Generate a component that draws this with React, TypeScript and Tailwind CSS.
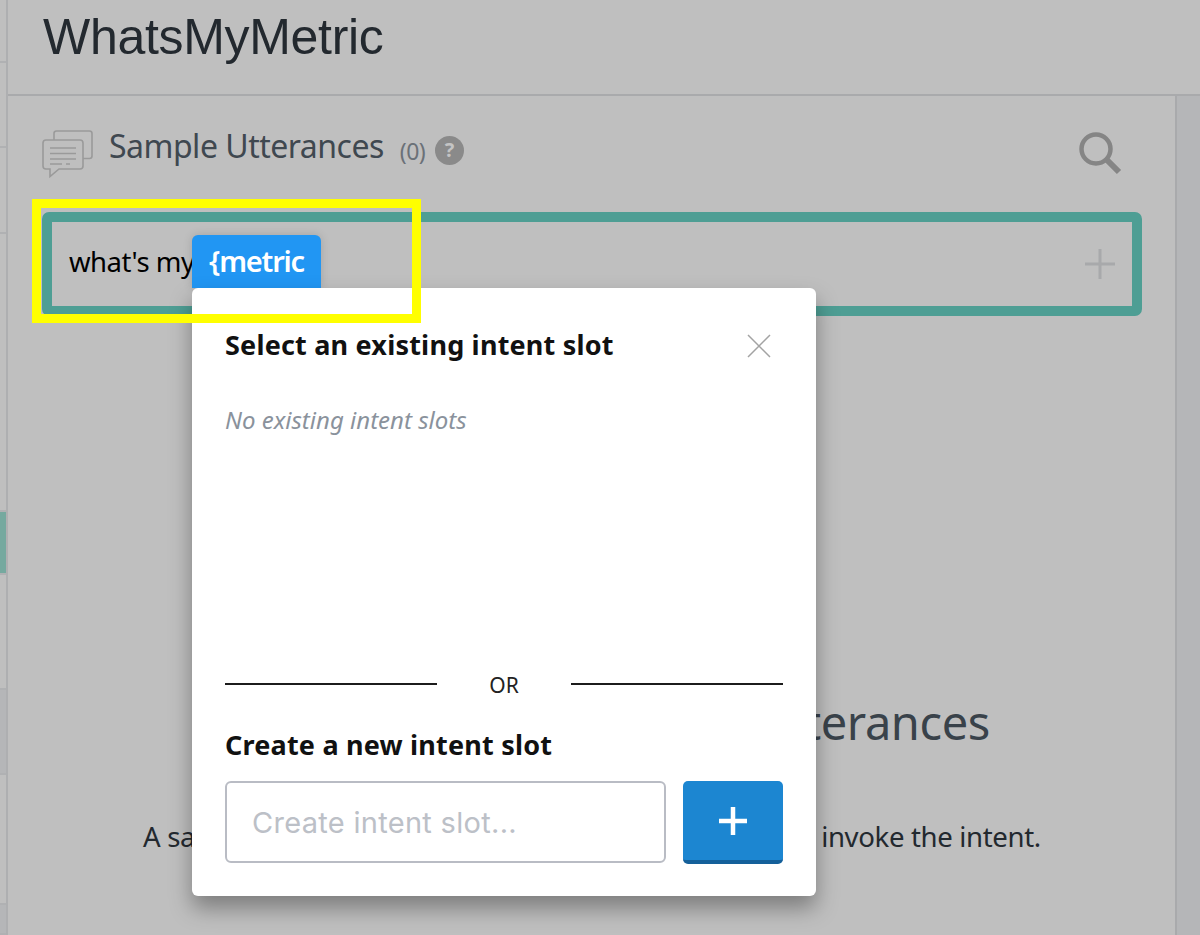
const SIDE_ROWS = [
  { h: "h-[63px]", bg: "bg-[#bfbfbf]" },
  { h: "h-[85px]", bg: "bg-[#bfbfbf]" },
  { h: "h-[86px]", bg: "bg-[#bfbfbf]" },
  { h: "h-[278px]", bg: "bg-[#bfbfbf]" },
  { h: "h-[63px]", bg: "bg-[#75a99f]" },
  { h: "h-[115px]", bg: "bg-[#bfbfbf]" },
  { h: "h-[85px]", bg: "bg-[#b5b6b8]" },
  { h: "h-[130px]", bg: "bg-[#bfbfbf]" },
  { h: "h-[30px]", bg: "bg-[#b5b6b8]" },
];

function ChatIcon() {
  return (
    <svg width="52" height="50" viewBox="0 0 52 50" fill="none" stroke="#9a9a9a" strokeWidth="1.6" className="shrink-0">
      <path d="M12 11V4.5Q12 2 14.5 2H47.5Q50 2 50 4.5V27Q50 29.5 47.5 29.5H41" />
      <path d="M4 11H38Q41 11 41 14V37Q41 40 38 40H17L8 47.5V40H4Q1 40 1 37V14Q1 11 4 11Z" fill="#bfbfbf" />
      <path d="M8 19H34M8 24.500H34M8 30H34M8 35H20M24 35H28" strokeWidth="1.4" />
    </svg>
  );
}

export default function App() {
  return (
    <div className="flex h-[935px] w-[1200px] overflow-hidden bg-[#bfbfbf] font-['Noto_Sans',sans-serif] text-[#23292f]">
      <div className="flex w-[8px] shrink-0 flex-col border-r-2 border-[#aeafb1]">
        {SIDE_ROWS.map((row, i) => (
          <div key={i} className={`${row.h} ${row.bg} shrink-0 border-b-2 border-[#b0b1b3]`} />
        ))}
      </div>

      <div className="flex min-w-0 flex-1 flex-col">
        <header className="flex h-[96px] shrink-0 items-start border-b-2 border-[#a9aaac] pl-[35px] pt-[6px]">
          <h1 className="font-['Liberation_Sans',sans-serif] text-[50px] leading-[62px] tracking-[-0.3px] text-[#23292f]">
            WhatsMyMetric
          </h1>
        </header>

        <div className="flex min-h-0 flex-1">
          <main className="relative flex min-w-0 flex-1 flex-col pl-[34px] pr-[33px] pt-[33px]">
            <div className="flex h-[50px] items-center">
              <ChatIcon />
              <span className="mb-[16px] ml-[15px] text-[32px] leading-none tracking-[-0.5px] text-[#3f4850]">Sample Utterances</span>
              <span className="mb-[6px] ml-[16px] text-[23px] leading-none tracking-[-0.6px] text-[#6b7178]">(0)</span>
              <span className="mb-[8px] ml-[10px] flex h-[29px] w-[29px] items-center justify-center rounded-full bg-[#8a8a8a] text-[20px] font-bold leading-none text-[#c4c4c4]">
                ?
              </span>
              <svg width="44" height="44" viewBox="0 0 44 44" fill="none" stroke="#858585" className="ml-auto mr-[19px]">
                <circle cx="17" cy="17" r="14.500" strokeWidth="4.500" />
                <path d="M28 28L40 40" strokeWidth="6" />
              </svg>
            </div>

            <div className="mt-[33px] flex h-[104px] items-center rounded-[7px] border-[10px] border-[#4e9e94] pl-[17px] pr-[16px]">
              <span className="mb-[4px] text-[27.500px] tracking-[-0.5px] text-black">what's my</span>
              <svg width="32" height="32" viewBox="0 0 32 32" stroke="#a8a9ab" strokeWidth="3" className="ml-auto">
                <path d="M16 1V31M1 16H31" />
              </svg>
            </div>

            <div className="mt-[378px] text-center text-[47px] leading-[56px] tracking-[-0.4px] text-[#39424a]">
              Get started using Sample Utterances
            </div>
            <p className="mt-[69px] text-center text-[27.600px] leading-[34px] tracking-[-0.36px] text-[#23292f]">
              A sample utterance is a phrase that a user may say to invoke the intent.
            </p>

            <div className="absolute left-[184px] top-[139px] z-10 flex h-[53px] w-[129px] items-center justify-center rounded-t-[6px] bg-[#2196f3] pb-[2px] text-[29px] font-semibold tracking-[-1.200px] text-white shadow-[0_0_10px_rgba(0,0,0,0.15)]">
              {"{metric"}
            </div>

            <section className="absolute left-[184px] top-[192px] z-20 flex h-[608px] w-[624px] flex-col rounded-[6px] bg-white px-[33px] pb-[32px] shadow-[0_12px_22px_rgba(0,0,0,0.35)]">
              <div className="flex h-[115px] shrink-0 items-start justify-between pt-[37px]">
                <h2 className="text-[27px] font-bold leading-[40px] tracking-[0.2px] text-[#111]">
                  Select an existing intent slot
                </h2>
                <svg width="24" height="24" viewBox="0 0 24 24" stroke="#a3a3a3" strokeWidth="1.500" className="mr-[12px] mt-[9px]">
                  <path d="M1 1L23 23M23 1L1 23" />
                </svg>
              </div>
              <p className="text-[24px] italic leading-[34px] text-[#8a929c]">No existing intent slots</p>

              <div className="mt-auto flex h-[24px] items-center">
                <div className="h-[2px] w-[212px] bg-[#1c1c1c]" />
                <span className="flex-1 pt-[2px] text-center text-[21px] leading-none text-[#222]">OR</span>
                <div className="h-[2px] w-[212px] bg-[#1c1c1c]" />
              </div>
              <h2 className="mt-[29px] text-[27px] font-bold leading-[40px] tracking-[0.2px] text-[#111]">
                Create a new intent slot
              </h2>
              <div className="mt-[16px] flex h-[83px] gap-[17px]">
                <div className="flex h-[82px] w-[441px] items-center rounded-[6px] border-2 border-[#b9bcc4] pl-[25px] pt-[1px] font-['Inter',sans-serif] text-[29px] tracking-[0.3px] text-[#bcc0c7]">
                  Create intent slot...
                </div>
                <button className="flex h-[83px] flex-1 items-center justify-center rounded-[5px] border-b-[4px] border-[#15609a] bg-[#1c86d1]">
                  <svg width="32" height="32" viewBox="0 0 32 32" stroke="#fff" strokeWidth="4.500">
                    <path d="M16 2V30M2 16H30" />
                  </svg>
                </button>
              </div>
            </section>

            <div className="pointer-events-none absolute left-[24px] top-[103px] z-30 h-[124px] w-[389px] border-[9px] border-[#ffff00]" />
          </main>
          <aside className="w-[25px] shrink-0 border-l-2 border-[#a9aaac] bg-[#b5b6b8]" />
        </div>
      </div>
    </div>
  );
}
